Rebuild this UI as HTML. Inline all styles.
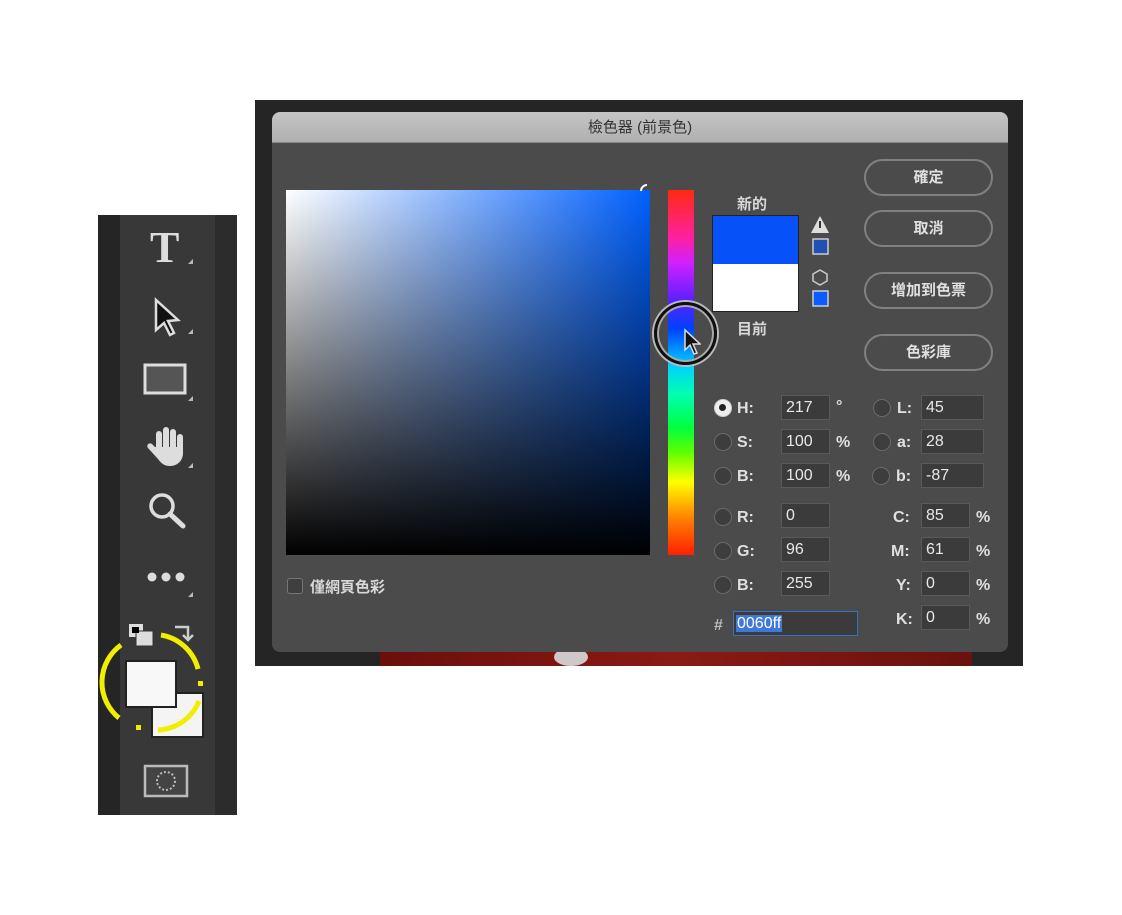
<!DOCTYPE html>
<html><head><meta charset="utf-8"><style>
*{margin:0;padding:0;box-sizing:border-box}
body{width:1122px;height:915px;background:#fff;position:relative;overflow:hidden;font-family:"Liberation Sans","Noto Sans CJK TC",sans-serif}
.a{position:absolute}
.t{color:#d8d8d8;font-size:15px;font-weight:bold}
.btn{position:absolute;left:864px;width:129px;height:37px;border:2px solid #808080;border-radius:19px;color:#e0e0e0;font-size:15px;font-weight:bold;text-align:center;line-height:33px}
.rad{position:absolute;width:18px;height:18px;border-radius:50%;border:1.5px solid #6a6a6a;background:#3d3d3d}
.in{position:absolute;height:25px;background:#3b3b3b;border:1px solid #5a5a5a;color:#e8e8e8;font-size:16px;padding-left:4px;line-height:23px}
.lb{position:absolute;color:#e0e0e0;font-size:16px;font-weight:bold}
</style></head><body>
<!-- toolbar -->
<div class="a" style="left:98px;top:215px;width:139px;height:600px;background:#252525"></div>
<div class="a" style="left:120px;top:215px;width:95px;height:600px;background:#383838"></div>
<div class="a" style="left:215px;top:215px;width:22px;height:600px;background:#2c2c2c"></div>
<div class="a" style="left:150px;top:226px;font-family:'Liberation Serif',serif;font-size:44px;font-weight:bold;color:#ddd;line-height:44px">T</div>
<svg class="a" style="left:98px;top:215px" width="139" height="600">
<g fill="#bbb"><path d="M90 49l5-5v5z"/><path d="M90 119l5-5v5z"/><path d="M90 186l5-5v5z"/><path d="M90 253l5-5v5z"/><path d="M90 382l5-5v5z"/></g>
<path d="M58 85v30l8-7 6 12 4-2-6-12 10-1z" fill="#111" stroke="#ddd" stroke-width="2.5"/>
<rect x="47" y="150" width="40" height="28" fill="#555" stroke="#ddd" stroke-width="3"/>
<g fill="#ddd"><rect x="58" y="216" width="6" height="22" rx="3"/><rect x="65" y="212" width="6" height="24" rx="3"/><rect x="72" y="214" width="6" height="24" rx="3"/><rect x="79" y="219" width="6" height="20" rx="3"/><path d="M57 232h28v6c0 8-6 13-13 13-6 0-9-3-12-7l-10-11c-2-3 1-6 4-4z"/></g>
<circle cx="64" cy="291" r="11" fill="none" stroke="#ddd" stroke-width="3.5"/><path d="M72 299l13 12" stroke="#ddd" stroke-width="5" stroke-linecap="round"/>
<circle cx="54" cy="362" r="4.5" fill="#ddd"/><circle cx="68" cy="362" r="4.5" fill="#ddd"/><circle cx="82" cy="362" r="4.5" fill="#ddd"/>
<rect x="31" y="409" width="14" height="13" fill="#ddd"/><rect x="38" y="416" width="17" height="15" fill="#ddd" stroke="#333"/><rect x="34" y="412" width="7" height="6" fill="#000"/>
<path d="M77 412h13v12m-5-4l5 5 5-5" fill="none" stroke="#ccc" stroke-width="2.5"/>
<rect x="54" y="478" width="51" height="44" fill="#f4f4f4" stroke="#222" stroke-width="2"/>
<rect x="28" y="446" width="50" height="46" fill="#f8f8f8" stroke="#222" stroke-width="2"/>
<g fill="none" stroke="#f2ee00" stroke-width="5"><path d="M23 430A46 46 0 0 0 21 503"/><path d="M63 420A46 46 0 0 1 100 454"/><path d="M101 486A46 46 0 0 1 60 515"/></g>
<rect x="100" y="466" width="5" height="5" fill="#f2ee00"/><rect x="38" y="510" width="5" height="5" fill="#f2ee00"/>
<rect x="47" y="551" width="42" height="30" fill="#444" stroke="#bbb" stroke-width="2.5"/><circle cx="68" cy="566" r="9" fill="none" stroke="#bbb" stroke-width="2" stroke-dasharray="2 2"/>
</svg>
<!-- dialog frame -->
<div class="a" style="left:255px;top:100px;width:768px;height:566px;background:#252525"></div>
<div class="a" style="left:380px;top:650px;width:592px;height:16px;background:linear-gradient(90deg,#6a0f0c,#8a1a14 50%,#6a120e)"></div>
<div class="a" style="left:554px;top:648px;width:34px;height:18px;border-radius:50%;background:#d0c8c8"></div>
<div class="a" style="left:272px;top:112px;width:736px;height:540px;background:#4b4b4b;border-radius:8px;overflow:hidden">
 <div style="height:31px;background:linear-gradient(#c4c4c4,#b0b0b0);border-bottom:1px solid #888;text-align:center;color:#333;font-size:15px;line-height:31px">檢色器 (前景色)</div>
</div>
<div class="a" style="left:286px;top:190px;width:364px;height:365px;background:linear-gradient(to bottom,rgba(0,0,0,0),#000),linear-gradient(to right,#fff,#0060ff)"></div>
<div class="a" style="left:640px;top:184px;width:14px;height:14px;border-radius:50%;border:2px solid #fff;clip-path:inset(0 50% 50% 0)"></div>
<div class="a" style="left:668px;top:190px;width:26px;height:365px;background:linear-gradient(#ff2a10,#ff20a0 13%,#d020ff 20%,#6020ff 30%,#0040ff 38%,#00d0ff 48%,#00ffb0 56%,#00ff40 65%,#60ff00 72%,#ffff00 80%,#ff8000 90%,#ff2000)"></div>
<div class="a" style="left:654px;top:302px;width:63px;height:63px;border-radius:50%;border:3px solid #111;box-shadow:0 0 0 2px #bbb,inset 0 0 0 2px #aaa"></div>
<svg class="a" style="left:683px;top:328px" width="18" height="28"><path d="M2 2v20l5-5 4 9 3-1-4-9h7z" fill="#111" stroke="#ddd" stroke-width="1.5"/></svg>
<div class="a t" style="left:737px;top:193px">新的</div>
<div class="a" style="left:712px;top:215px;width:87px;height:97px;border:1px solid #222"><div style="height:48px;background:#0652f8"></div><div style="height:47px;background:#fff"></div></div>
<div class="a t" style="left:737px;top:318px">目前</div>
<svg class="a" style="left:809px;top:215px" width="22" height="92"><path d="M11 1L20 18H2z" fill="#ddd"/><rect x="10" y="6" width="2" height="7" fill="#333"/><rect x="4" y="24" width="15" height="15" fill="#2050b0" stroke="#ccc" stroke-width="1.5"/><path d="M11 55l7 4v7l-7 4-7-4v-7z" fill="none" stroke="#ccc" stroke-width="1.5"/><rect x="4" y="76" width="15" height="15" fill="#0b5cff" stroke="#ccc" stroke-width="1.5"/></svg>
<div class="btn" style="top:159px">確定</div>
<div class="btn" style="top:210px">取消</div>
<div class="btn" style="top:272px">增加到色票</div>
<div class="btn" style="top:334px">色彩庫</div>
<!-- fields -->
<div class="rad" style="left:714px;top:399px;background:#eee;border-color:#ccc"><div style="width:7px;height:7px;background:#222;border-radius:50%;margin:4px"></div></div>
<div class="rad" style="left:714px;top:433px"></div><div class="rad" style="left:714px;top:467px"></div>
<div class="rad" style="left:714px;top:508px"></div><div class="rad" style="left:714px;top:542px"></div><div class="rad" style="left:714px;top:576px"></div>
<div class="rad" style="left:873px;top:399px"></div><div class="rad" style="left:873px;top:433px"></div><div class="rad" style="left:872px;top:467px"></div>
<div class="lb" style="left:737px;top:400px">H:</div><div class="lb" style="left:737px;top:434px">S:</div><div class="lb" style="left:737px;top:468px">B:</div>
<div class="lb" style="left:737px;top:509px">R:</div><div class="lb" style="left:737px;top:543px">G:</div><div class="lb" style="left:737px;top:577px">B:</div>
<div class="in" style="left:781px;top:395px;width:49px">217</div><div class="in" style="left:781px;top:429px;width:49px">100</div><div class="in" style="left:781px;top:463px;width:49px">100</div>
<div class="in" style="left:781px;top:503px;width:49px">0</div><div class="in" style="left:781px;top:537px;width:49px">96</div><div class="in" style="left:781px;top:571px;width:49px">255</div>
<div class="lb" style="left:836px;top:398px">°</div><div class="lb" style="left:836px;top:434px">%</div><div class="lb" style="left:836px;top:468px">%</div>
<div class="lb" style="left:897px;top:400px">L:</div><div class="lb" style="left:897px;top:434px">a:</div><div class="lb" style="left:896px;top:468px">b:</div>
<div class="in" style="left:921px;top:395px;width:63px">45</div><div class="in" style="left:921px;top:429px;width:63px">28</div><div class="in" style="left:921px;top:463px;width:63px">-87</div>
<div class="lb" style="left:893px;top:509px">C:</div><div class="lb" style="left:891px;top:543px">M:</div><div class="lb" style="left:896px;top:577px">Y:</div><div class="lb" style="left:896px;top:611px">K:</div>
<div class="in" style="left:921px;top:503px;width:49px">85</div><div class="in" style="left:921px;top:537px;width:49px">61</div><div class="in" style="left:921px;top:571px;width:49px">0</div><div class="in" style="left:921px;top:605px;width:49px">0</div>
<div class="lb" style="left:976px;top:509px">%</div><div class="lb" style="left:976px;top:543px">%</div><div class="lb" style="left:976px;top:577px">%</div><div class="lb" style="left:976px;top:611px">%</div>
<div class="lb" style="left:714px;top:617px;color:#bbb">#</div>
<div class="in" style="left:733px;top:611px;width:125px;border-color:#3a70c0;padding-left:2px"><span style="background:#3f78d8;color:#fff;padding:0 1px">0060ff</span></div>
<div class="a" style="left:287px;top:578px;width:16px;height:16px;border:1.5px solid #777;border-radius:3px;background:#3f3f3f"></div>
<div class="a t" style="left:310px;top:576px">僅網頁色彩</div>
</body></html>
